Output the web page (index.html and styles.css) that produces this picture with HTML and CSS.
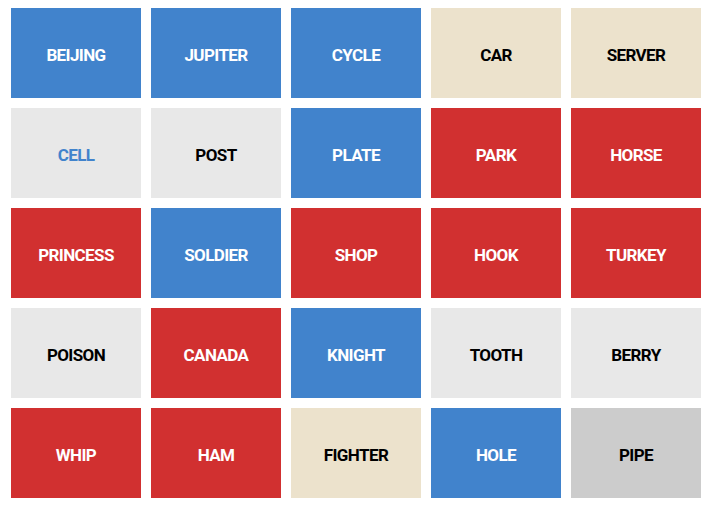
FILE: index.html
```html
<!DOCTYPE html>
<html>
<head>
<meta charset="utf-8">
<link rel="stylesheet" href="styles.css">
</head>
<body>
<div class="board">
  <div class="card blue">BEIJING</div>
  <div class="card blue">JUPITER</div>
  <div class="card blue">CYCLE</div>
  <div class="card beige">CAR</div>
  <div class="card beige">SERVER</div>
  <div class="card gray blue-text">CELL</div>
  <div class="card gray">POST</div>
  <div class="card blue">PLATE</div>
  <div class="card red">PARK</div>
  <div class="card red">HORSE</div>
  <div class="card red">PRINCESS</div>
  <div class="card blue">SOLDIER</div>
  <div class="card red">SHOP</div>
  <div class="card red">HOOK</div>
  <div class="card red">TURKEY</div>
  <div class="card gray">POISON</div>
  <div class="card red">CANADA</div>
  <div class="card blue">KNIGHT</div>
  <div class="card gray">TOOTH</div>
  <div class="card gray">BERRY</div>
  <div class="card red">WHIP</div>
  <div class="card red">HAM</div>
  <div class="card beige">FIGHTER</div>
  <div class="card blue">HOLE</div>
  <div class="card dark">PIPE</div>
</div>
</body>
</html>
```

FILE: styles.css
```css
html, body {
  margin: 0;
  padding: 0;
  background: #ffffff;
}

.board {
  display: grid;
  grid-template-columns: repeat(5, 130px);
  grid-auto-rows: 90px;
  gap: 10px;
  padding: 8px 11px;
}

.card {
  display: flex;
  align-items: center;
  justify-content: center;
  padding-top: 4px;
  box-sizing: border-box;
  font-family: Roboto, "Liberation Sans", sans-serif;
  font-weight: 700;
  font-size: 17px;
  letter-spacing: -0.6px;
  color: #000000;
}

.blue {
  background: #4183cc;
  color: #ffffff;
}

.red {
  background: #d13030;
  color: #ffffff;
}

.beige {
  background: #ece2cc;
}

.gray {
  background: #e8e8e8;
}

.dark {
  background: #cccccc;
}

.blue-text {
  color: #4183cc;
}
```
